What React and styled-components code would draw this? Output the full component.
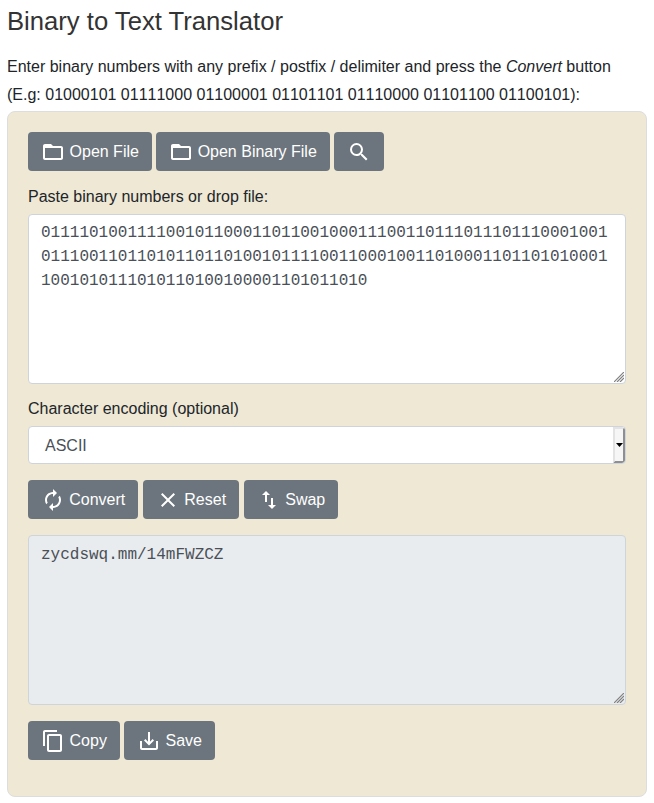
import React from 'react';
import styled, { createGlobalStyle } from 'styled-components';

const GlobalStyle = createGlobalStyle`
  *, *::before, *::after { box-sizing: border-box; }
  body {
    margin: 0;
    background: #fff;
    color: #212529;
    font: 16px/24px "Liberation Sans", Arial, sans-serif;
  }
`;

const Page = styled.main`
  width: 654px;
  height: 803px;
  padding: 5px 7px 0;
`;

const Title = styled.h1`
  margin: 0 0 16px;
  color: #333;
  font-size: 25.65px;
  font-weight: 400;
  line-height: 32px;
`;

const Intro = styled.p`
  margin: 0 0 2px;
  line-height: 28px;
`;

const Sample = styled.span`
  font-kerning: none;
`;

const Panel = styled.form`
  display: flex;
  flex-direction: column;
  width: 640px;
  height: 686px;
  padding: 20px;
  border: 1px solid #ddd;
  border-radius: 8px;
  background: #eee8d5;
`;

const ButtonRow = styled.div`
  display: flex;
  gap: ${({ $gap }) => $gap || 4}px;
  height: 39px;
`;

const Button = styled.button`
  display: flex;
  align-items: center;
  justify-content: center;
  gap: 4.45px;
  width: ${({ $width }) => $width}px;
  height: 39px;
  padding: 0;
  border: 0;
  border-radius: 4px;
  background: #6c757d;
  color: #fff;
  font: inherit;
  white-space: nowrap;
`;

const IconSvg = styled.svg`
  flex: none;
  width: 24px;
  height: 24px;
  fill: #fff;
`;

const Label = styled.label`
  margin: ${({ $top }) => $top}px 0 ${({ $bottom }) => $bottom}px;
`;

const AreaFrame = styled.div`
  position: relative;
  height: 170px;
  margin: ${({ $gap }) => $gap || 0}px 0;
`;

const Area = styled.textarea`
  display: block;
  width: 100%;
  height: 100%;
  padding: ${({ readOnly }) => (readOnly ? 7 : 6)}px 12px 6px;
  border: 1px solid #ced4da;
  border-radius: 4px;
  outline: 0;
  overflow: hidden;
  resize: none;
  background: ${({ readOnly }) => (readOnly ? '#e9ecef' : '#fff')};
  color: #495057;
  font: 16px/24px "Liberation Mono", monospace;
  word-break: break-all;
`;

const GripSvg = styled.svg`
  position: absolute;
  right: 2px;
  bottom: 2px;
  width: 10px;
  height: 10px;
`;

const SelectBox = styled.div`
  display: flex;
  align-items: stretch;
  justify-content: space-between;
  height: 38px;
  margin-bottom: 16px;
  padding-left: 16px;
  overflow: hidden;
  border: 1px solid #ced4da;
  border-radius: 4px;
  background: #fff;
  color: #495057;
  line-height: 37px;
`;

const SelectArrow = styled.span`
  display: flex;
  align-items: center;
  justify-content: center;
  width: 12px;
  border: 2px solid;
  border-color: #e3e3e3 #8f8f8f #8f8f8f #e3e3e3;
  border-radius: 0 3px 3px 0;
  background: #f6f6f6;
`;

const ArrowSvg = styled.svg`
  flex: none;
  width: 7px;
  height: 4px;
`;

const ICONS = {
  folder: 'M20 6h-8l-2-2H4c-1.1 0-1.99.9-1.99 2L2 18c0 1.1.9 2 2 2h16c1.1 0 2-.9 2-2V8c0-1.1-.9-2-2-2zm0 12H4V8h16v10z',
  search: 'M15.5 14h-.79l-.28-.27A6.47 6.47 0 0 0 16 9.5 6.5 6.5 0 1 0 9.5 16c1.61 0 3.09-.59 4.23-1.57l.27.28v.79l5 4.99L20.49 19l-4.99-5zm-6 0C7.01 14 5 11.99 5 9.5S7.01 5 9.5 5 14 7.01 14 9.5 11.99 14 9.5 14z',
  convert: 'M12 6v3l4-4-4-4v3c-4.42 0-8 3.58-8 8 0 1.57.46 3.03 1.24 4.26L6.7 14.8A5.87 5.87 0 0 1 6 12c0-3.31 2.69-6 6-6zm6.76 1.74L17.3 9.2c.44.84.7 1.79.7 2.8 0 3.31-2.69 6-6 6v-3l-4 4 4 4v-3c4.42 0 8-3.58 8-8 0-1.57-.46-3.03-1.24-4.26z',
  close: 'M19 6.41 17.59 5 12 10.59 6.41 5 5 6.41 10.59 12 5 17.59 6.41 19 12 13.41 17.59 19 19 17.59 13.41 12z',
  swap: 'M16 17.01V10h-2v7.01h-3L15 21l4-3.99h-3zM9 3 5 6.99h3V14h2V6.99h3L9 3z',
  copy: 'M16 1H4c-1.1 0-2 .9-2 2v14h2V3h12V1zm3 4H8c-1.1 0-2 .9-2 2v14c0 1.1.9 2 2 2h11c1.1 0 2-.9 2-2V7c0-1.1-.9-2-2-2zm0 16H8V7h11v14z',
  save: 'M19 12v7H5v-7H3v7c0 1.1.9 2 2 2h14c1.1 0 2-.9 2-2v-7h-2zm-6 .67 2.59-2.58L17 11.5l-5 5-5-5 1.41-1.41L11 12.67V3h2z',
};

function Icon({ name }) {
  return (
    <IconSvg viewBox="0 0 24 24" aria-hidden="true">
      <path d={ICONS[name]} />
    </IconSvg>
  );
}

function Grip() {
  return (
    <GripSvg viewBox="0 0 10 10" aria-hidden="true">
      <path d="M0 10 10 0M3 10l7-7M6 10l4-4" stroke="#808080" strokeWidth="1.2" />
    </GripSvg>
  );
}

function ActionButton({ icon, width, children }) {
  return (
    <Button type="button" $width={width} aria-label={children ? undefined : icon}>
      <Icon name={icon} />
      {children && <span>{children}</span>}
    </Button>
  );
}

const BINARY =
  '01111010011110010110001101100100011100110111011101110001001' +
  '01110011011010110110100101111001100010011010001101101010001' +
  '1001010111010110100100001101011010';

export default function App() {
  return (
    <>
      <GlobalStyle />
      <Page>
        <Title>Binary to Text Translator</Title>
        <Intro>
          Enter binary numbers with any prefix / postfix / delimiter and press the <em>Convert</em> button
          <br />
          <Sample>(E.g: 01000101 01111000 01100001 01101101 01110000 01101100 01100101):</Sample>
        </Intro>
        <Panel>
          <ButtonRow>
            <ActionButton icon="folder" width={124}>Open File</ActionButton>
            <ActionButton icon="folder" width={174}>Open Binary File</ActionButton>
            <ActionButton icon="search" width={50} />
          </ButtonRow>
          <Label htmlFor="source" $top={14} $bottom={5}>Paste binary numbers or drop file:</Label>
          <AreaFrame>
            <Area id="source" defaultValue={BINARY} spellCheck={false} />
            <Grip />
          </AreaFrame>
          <Label $top={13} $bottom={5}>Character encoding (optional)</Label>
          <SelectBox>
            <span>ASCII</span>
            <SelectArrow>
              <ArrowSvg viewBox="0 0 7 4"><path d="M0 0h7L3.5 4z" /></ArrowSvg>
            </SelectArrow>
          </SelectBox>
          <ButtonRow $gap={5}>
            <ActionButton icon="convert" width={110}>Convert</ActionButton>
            <ActionButton icon="close" width={96}>Reset</ActionButton>
            <ActionButton icon="swap" width={94}>Swap</ActionButton>
          </ButtonRow>
          <AreaFrame $gap={16}>
            <Area readOnly value="zycdswq.mm/14mFWZCZ" spellCheck={false} />
            <Grip />
          </AreaFrame>
          <ButtonRow>
            <ActionButton icon="copy" width={92}>Copy</ActionButton>
            <ActionButton icon="save" width={91}>Save</ActionButton>
          </ButtonRow>
        </Panel>
      </Page>
    </>
  );
}
